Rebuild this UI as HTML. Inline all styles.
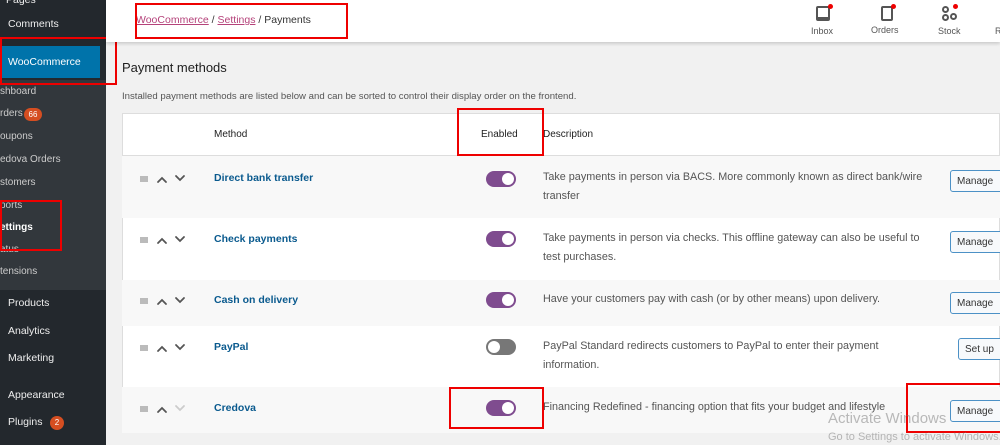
<!DOCTYPE html>
<html><head><meta charset="utf-8"><style>
*{margin:0;padding:0;box-sizing:border-box}
body{width:1000px;height:445px;overflow:hidden;background:#f1f1f1;font-family:"Liberation Sans",sans-serif;position:relative;color:#1e1e1e}
.a{position:absolute;white-space:nowrap}
#sb{left:0;top:0;width:106px;height:445px;background:#23282d}
#sub{left:0;top:80px;width:106px;height:210px;background:#32373c}
.sl{color:#eee;font-size:10.5px}
.ss{color:#ccc;font-size:10px}
#top{left:106px;top:0;width:894px;height:42px;background:#fff;box-shadow:0 2px 3px rgba(0,0,0,.15)}
.red{border:2px solid #e00;position:absolute}
.row{position:absolute;left:122px;width:878px}
.m{color:#0a5a8e;font-weight:bold;font-size:10.5px}
.d{color:#555;font-size:10.8px;line-height:19px;white-space:normal;width:392px}
.tg{position:absolute;left:486px;width:30px;height:16px;border-radius:8px;background:#7f4c8f}
.tg:after{content:"";position:absolute;right:2px;top:2px;width:12px;height:12px;border-radius:50%;background:#fff}
.tg.off{background:#777}.tg.off:after{right:auto;left:2px}
.btn{position:absolute;left:950px;width:60px;height:22px;border:1px solid #4c91c6;border-radius:3px;background:#f7f9fb;color:#333;font-size:10px;padding:5px 6px}
.hd{position:absolute;left:140px;width:8px;height:6px;background:#bbb}
</style></head><body>
<div class="a" id="sb"></div><div class="a" id="sub"></div>
<div class="a sl" style="left:6px;top:-6px">Pages</div>
<div class="a sl" style="left:8px;top:18px">Comments</div>
<div class="a" style="left:0;top:46px;width:100px;height:32px;background:#0073aa"></div>
<div class="a" style="left:100px;top:55px;width:0;height:0;border:7px solid transparent;border-right-color:#f1f1f1"></div>
<div class="a" style="left:8px;top:56px;color:#fff;font-size:10.5px">WooCommerce</div>
<div class="a ss" style="left:0;top:86px">shboard</div>
<div class="a ss" style="left:0;top:108px">rders</div>
<div class="a" style="left:24px;top:108px;width:18px;height:13px;border-radius:7px;background:#d54e21;color:#fff;font-size:8px;text-align:center;line-height:13px">66</div>
<div class="a ss" style="left:0;top:131px">oupons</div>
<div class="a ss" style="left:0;top:154px">edova Orders</div>
<div class="a ss" style="left:0;top:177px">stomers</div>
<div class="a ss" style="left:0;top:200px">ports</div>
<div class="a" style="left:0;top:222px;color:#fff;font-size:10px;font-weight:bold">ettings</div>
<div class="a ss" style="left:0;top:244px">atus</div>
<div class="a ss" style="left:0;top:266px">tensions</div>
<div class="a sl" style="left:8px;top:297px">Products</div>
<div class="a sl" style="left:8px;top:325px">Analytics</div>
<div class="a sl" style="left:8px;top:352px">Marketing</div>
<div class="a sl" style="left:8px;top:389px">Appearance</div>
<div class="a sl" style="left:8px;top:416px">Plugins</div>
<div class="a" style="left:50px;top:416px;width:14px;height:14px;border-radius:7px;background:#d54e21;color:#fff;font-size:8px;text-align:center;line-height:14px">2</div>
<div class="red" style="left:0;top:37px;width:117px;height:48px"></div>
<div class="red" style="left:0;top:200px;width:62px;height:51px"></div>

<div class="a" id="top"></div>
<div class="a" style="left:136px;top:14px;font-size:10.5px;color:#333"><span style="color:#b5427a;text-decoration:underline">WooCommerce</span> / <span style="color:#b5427a;text-decoration:underline">Settings</span> / Payments</div>
<div class="red" style="left:135px;top:3px;width:213px;height:36px"></div>
<div class="a" style="left:816px;top:6px;width:14px;height:15px;border:2px solid #555;border-radius:2px;border-bottom-width:4px"></div>
<div class="a" style="left:828px;top:4px;width:5px;height:5px;border-radius:50%;background:#e00"></div>
<div class="a" style="left:881px;top:6px;width:12px;height:15px;border:2px solid #555;border-radius:2px"></div>
<div class="a" style="left:891px;top:4px;width:5px;height:5px;border-radius:50%;background:#e00"></div>
<div class="a" style="left:942px;top:6px;width:7px;height:7px;border:2px solid #555;border-radius:50%"></div>
<div class="a" style="left:950px;top:13px;width:7px;height:7px;border:2px solid #555;border-radius:50%"></div>
<div class="a" style="left:942px;top:14px;width:7px;height:7px;border:2px solid #555;border-radius:50%"></div>
<div class="a" style="left:953px;top:4px;width:5px;height:5px;border-radius:50%;background:#e00"></div>
<div class="a" style="left:811px;top:26px;font-size:9px;color:#555">Inbox</div>
<div class="a" style="left:871px;top:25px;font-size:9px;color:#555">Orders</div>
<div class="a" style="left:938px;top:26px;font-size:9px;color:#555">Stock</div>
<div class="a" style="left:995px;top:26px;font-size:9px;color:#555">R</div>

<div class="a" style="left:122px;top:60px;font-size:13px;color:#1e1e1e">Payment methods</div>
<div class="a" style="left:122px;top:91px;font-size:9.6px;color:#555">Installed payment methods are listed below and can be sorted to control their display order on the frontend.</div>

<div class="row" style="top:113px;height:320px;background:#fff;border:1px solid #ddd"></div>
<div class="row" style="top:155px;height:1px;background:#ddd"></div>
<div class="a" style="left:214px;top:129px;font-size:10px">Method</div>
<div class="a" style="left:481px;top:129px;font-size:10px">Enabled</div>
<div class="a" style="left:543px;top:129px;font-size:10px">Description</div>
<div class="red" style="left:457px;top:108px;width:87px;height:48px"></div>

<div class="row" style="top:156px;height:62px;background:#f8f8f8"></div>
<div class="row" style="top:280px;height:46px;background:#f8f8f8"></div>
<div class="row" style="top:387px;height:46px;background:#f8f8f8"></div>

<svg width="1000" height="445" style="position:absolute;left:0;top:0" fill="none" stroke-width="1.8" stroke-linecap="round">
<g stroke="#555">
<path d="M158 182l4-4 4 4M176 176l4 4 4-4"/>
<path d="M158 243l4-4 4 4M176 237l4 4 4-4"/>
<path d="M158 304l4-4 4 4M176 298l4 4 4-4"/>
<path d="M158 351l4-4 4 4M176 345l4 4 4-4"/>
<path d="M158 412l4-4 4 4"/>
</g>
<path d="M176 406l4 4 4-4" stroke="#ccc"/>
</svg>
<div class="hd" style="top:176px"></div>
<div class="hd" style="top:237px"></div>
<div class="hd" style="top:298px"></div>
<div class="hd" style="top:345px"></div>
<div class="hd" style="top:406px"></div>

<div class="a m" style="left:214px;top:172px">Direct bank transfer</div>
<div class="tg" style="top:171px"></div>
<div class="a d" style="left:543px;top:168px">Take payments in person via BACS. More commonly known as direct bank/wire transfer</div>
<div class="btn" style="top:170px">Manage</div>

<div class="a m" style="left:214px;top:233px">Check payments</div>
<div class="tg" style="top:231px"></div>
<div class="a d" style="left:543px;top:229px">Take payments in person via checks. This offline gateway can also be useful to test purchases.</div>
<div class="btn" style="top:231px">Manage</div>

<div class="a m" style="left:214px;top:294px">Cash on delivery</div>
<div class="tg" style="top:292px"></div>
<div class="a d" style="left:543px;top:290px">Have your customers pay with cash (or by other means) upon delivery.</div>
<div class="btn" style="top:292px">Manage</div>

<div class="a m" style="left:214px;top:341px">PayPal</div>
<div class="tg off" style="top:339px"></div>
<div class="a d" style="left:543px;top:337px">PayPal Standard redirects customers to PayPal to enter their payment information.</div>
<div class="btn" style="top:338px;left:958px">Set up</div>

<div class="a m" style="left:214px;top:402px">Credova</div>
<div class="tg" style="top:400px"></div>
<div class="a d" style="left:543px;top:398px;width:420px">Financing Redefined - financing option that fits your budget and lifestyle</div>
<div class="btn" style="top:400px">Manage</div>
<div class="red" style="left:449px;top:387px;width:95px;height:42px"></div>
<div class="red" style="left:906px;top:383px;width:100px;height:50px"></div>
<div class="a" style="left:828px;top:410px;font-size:15px;color:rgba(120,120,120,.5)">Activate Windows</div>
<div class="a" style="left:828px;top:431px;font-size:11px;color:rgba(120,120,120,.5)">Go to Settings to activate Windows.</div>
</body></html>
